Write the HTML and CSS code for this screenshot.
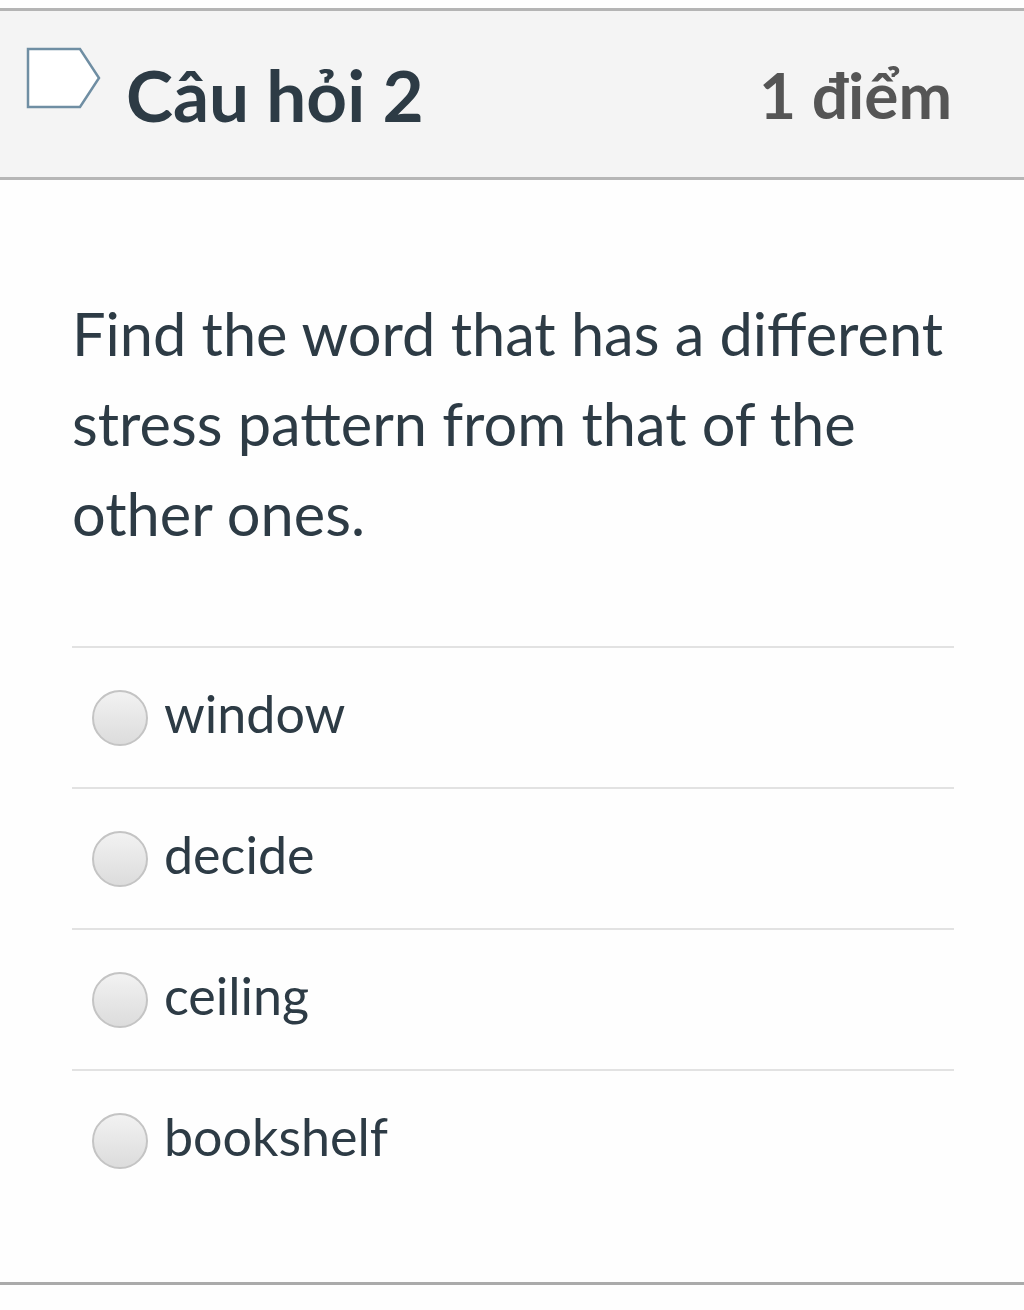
FILE: index.html
```html
<!DOCTYPE html>
<html lang="vi">
<head>
    <meta charset="UTF-8">
    <meta name="viewport" content="width=device-width, initial-scale=1.0">
    <title>Câu hỏi 2</title>
    <link rel="stylesheet" href="styles.css">
</head>
<body>
    <div class="question">
        <div class="question-header">
            <svg class="flag" width="76" height="62" viewBox="0 0 76 62">
                <path d="M2 2 H54 L73 31 L54 60 H2 Z" fill="#fff" stroke="#6f8ea3" stroke-width="2.5"/>
            </svg>
            <h2 class="question-title">Câu hỏi 2</h2>
            <span class="question-points">1 điểm</span>
        </div>

        <div class="question-body">
            <p class="question-text">
                Find the word that has a different stress pattern from that of the other ones.
            </p>

            <div class="answers">
                <label class="answer">
                    <span class="radio"></span>
                    <span class="answer-text">window</span>
                </label>
                <label class="answer">
                    <span class="radio"></span>
                    <span class="answer-text">decide</span>
                </label>
                <label class="answer">
                    <span class="radio"></span>
                    <span class="answer-text">ceiling</span>
                </label>
                <label class="answer">
                    <span class="radio"></span>
                    <span class="answer-text">bookshelf</span>
                </label>
            </div>
        </div>
    </div>
</body>
</html>
```

FILE: styles.css
```css
/* Quiz question card */
body {
    margin: 0;
    padding: 8px 0 0;
    background-color: #fefefe;
    font-family: Lato, "Open Sans", sans-serif;
    color: #2d3b45;
}

.question {
    border-top: 3px solid #b4b4b4;
    border-bottom: 3px solid #aaa;
}

.question-header {
    display: flex;
    align-items: center;
    height: 166px;
    padding: 0 72px 0 26px;
    background-color: #f4f4f4;
    border-bottom: 3px solid #b6b6b6;
}

.flag {
    align-self: flex-start;
    margin-top: 36px;
    flex-shrink: 0;
}

.question-title {
    margin: 0 0 0 24px;
    font-size: 71px;
    font-weight: 700;
    color: #2d3b45;
    flex: 1;
}

.question-points {
    font-size: 64px;
    font-weight: 700;
    color: #555;
}

.question-body {
    padding: 108px 70px 72px 72px;
}

.question-text {
    margin: 0 0 88px;
    font-size: 59.5px;
    line-height: 90px;
}

.answer {
    display: flex;
    align-items: center;
    height: 139px;
    border-top: 2px solid #e2e2e2;
}

.radio {
    width: 52px;
    height: 52px;
    margin: 0 16px 0 20px;
    border: 2px solid #c4c4c4;
    border-radius: 50%;
    background: linear-gradient(#f2f2f2, #dcdcdc);
    flex-shrink: 0;
}

.answer-text {
    font-size: 52px;
    padding-bottom: 10px;
}
```
